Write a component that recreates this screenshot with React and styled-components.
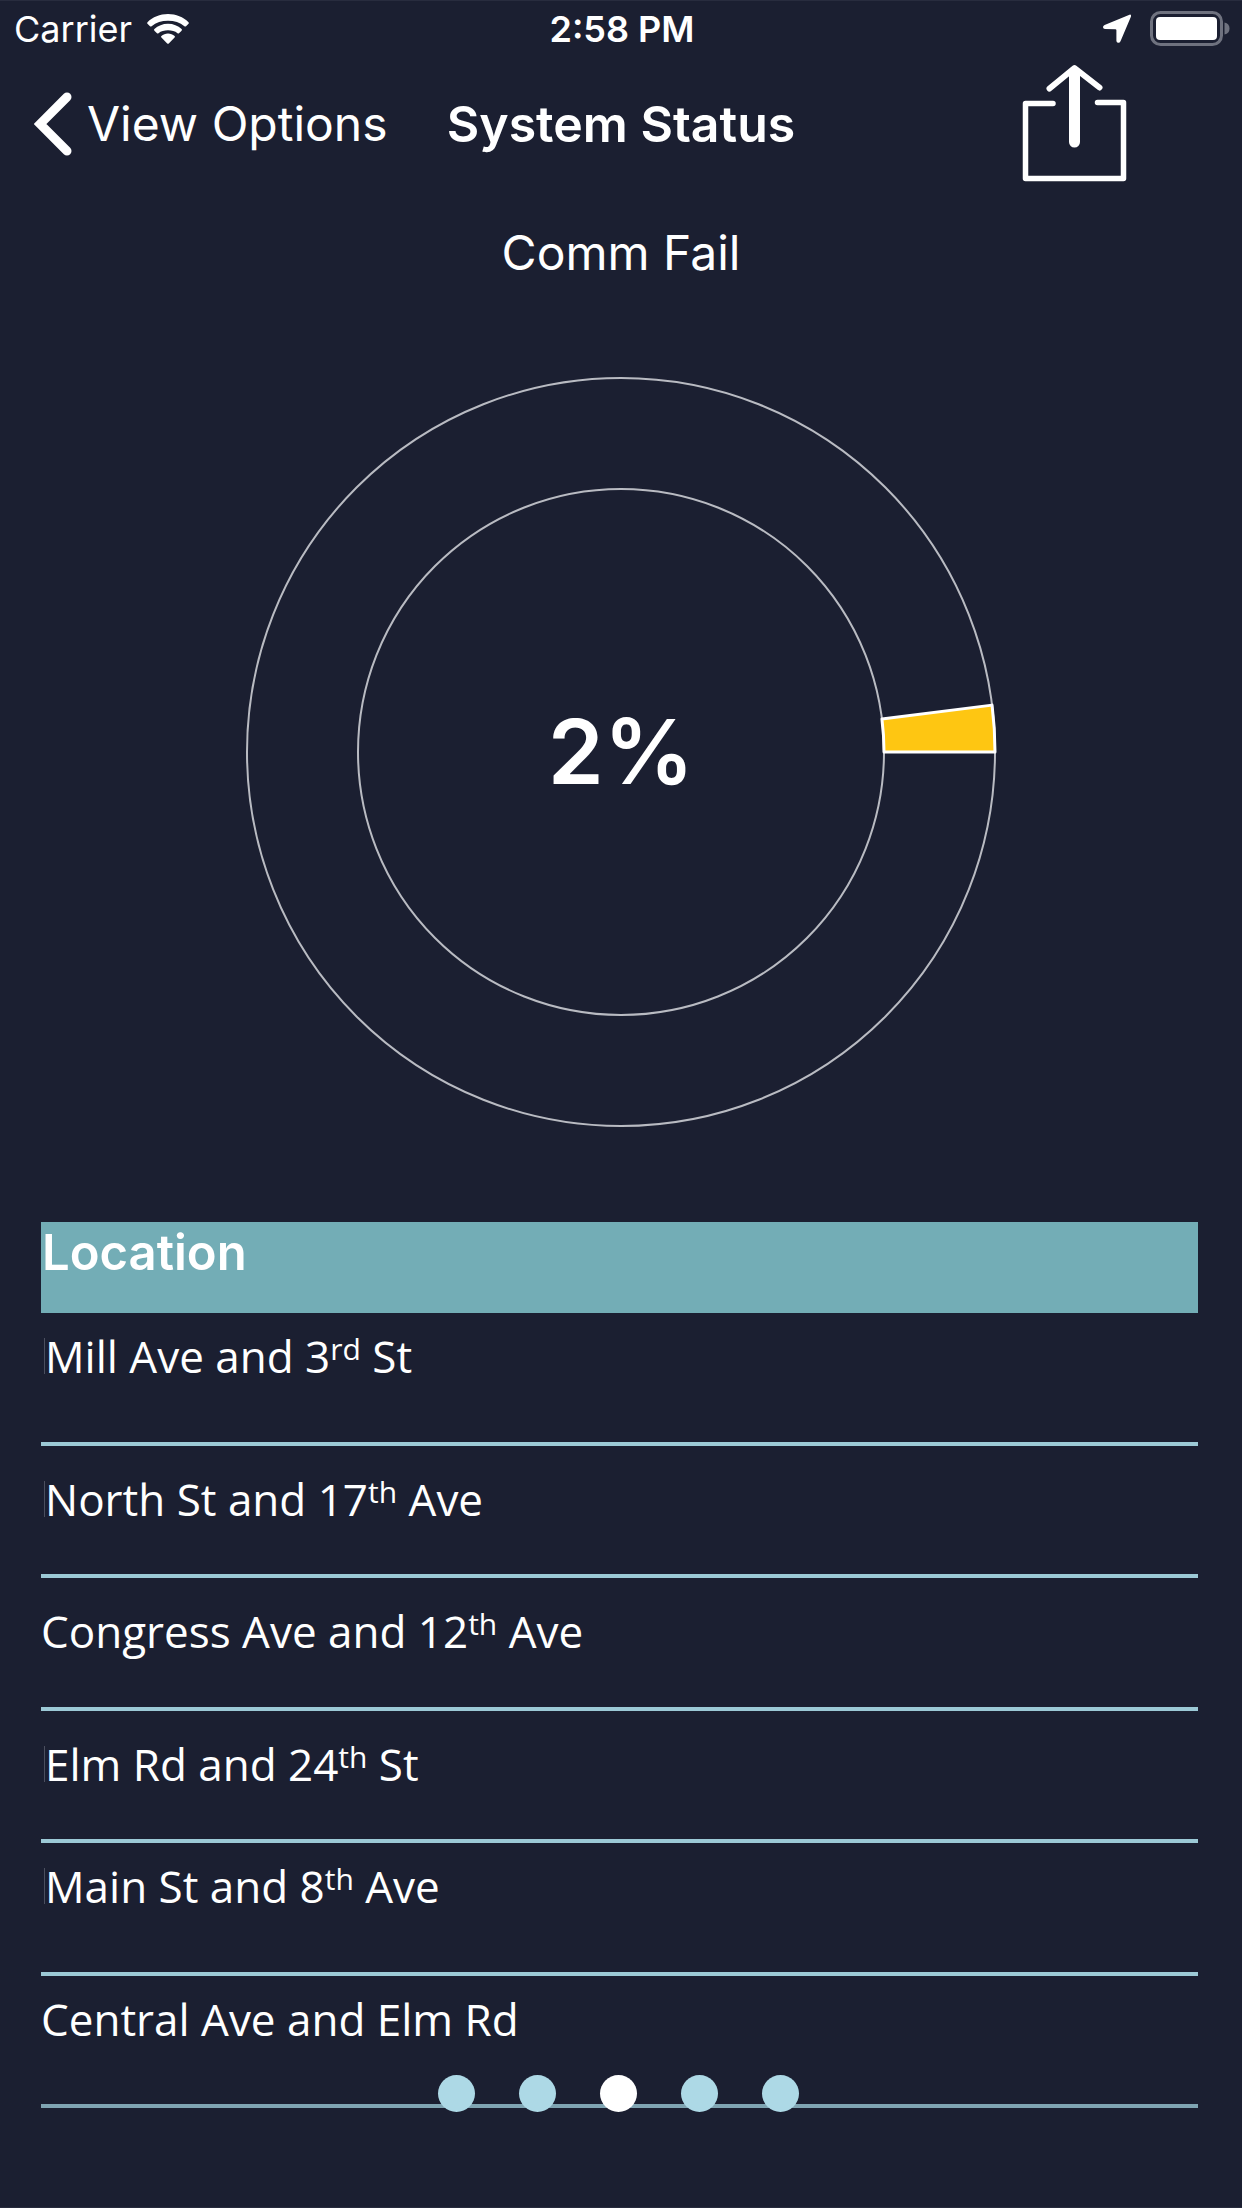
import styled, { createGlobalStyle } from 'styled-components';

const colors = {
  page: '#1b1f31',
  edge: '#282c3e',
  white: '#ffffff',
  teal: '#73adb6',
  line: '#9cc9d6',
  lineDim: '#7fa4b2',
  dot: '#add9e6',
  ring: '#b9bbc2',
  slice: '#fec612',
  muted: '#6f727f',
  tick: '#4b4f5f',
};

const GlobalStyle = createGlobalStyle`
  * {
    box-sizing: border-box;
  }

  body {
    margin: 0;
    background: ${colors.page};
    color: ${colors.white};
    font-family: Inter, 'Liberation Sans', sans-serif;
  }
`;

const Screen = styled.div`
  display: flex;
  flex-direction: column;
  min-height: 100vh;
  border-top: 1px solid ${colors.edge};
  border-bottom: 1px solid ${colors.edge};
`;

const StatusBar = styled.div`
  display: grid;
  grid-template-columns: 1fr auto 1fr;
  align-items: center;
  height: 56px;
  padding: 0 12px 0 14px;
  font-size: 36px;
  line-height: 44px;
`;

const StatusGroup = styled.div`
  display: flex;
  align-items: center;
  justify-content: ${(props) => (props.$end ? 'flex-end' : 'flex-start')};
  gap: ${(props) => (props.$end ? '18px' : '15px')};
`;

const Clock = styled.time`
  font-weight: 600;
`;

const Icon = styled.svg`
  display: block;
  flex: none;
`;

const NavBar = styled.header`
  display: grid;
  grid-template-columns: 1fr auto 1fr;
  align-items: center;
  height: 134px;
  line-height: 60px;
`;

const BackLink = styled.a`
  display: flex;
  align-items: center;
  gap: 15px;
  padding-left: 34px;
  color: inherit;
  font-size: 48px;
  text-decoration: none;
  white-space: nowrap;
`;

const Title = styled.h1`
  margin: 0;
  font-size: 50px;
  font-weight: 600;
`;

const ShareButton = styled.button`
  justify-self: end;
  margin: 0 114px 0 0;
  padding: 0;
  border: 0;
  background: none;
  color: inherit;
  cursor: pointer;
`;

const Main = styled.main`
  display: flex;
  flex-direction: column;
`;

const ChartTitle = styled.h2`
  margin: 0;
  padding: 32px 0;
  font-size: 48px;
  font-weight: 400;
  line-height: 60px;
  text-align: center;
`;

const Chart = styled.figure`
  display: grid;
  place-items: center;
  margin: 61px 0 94px;

  > * {
    grid-area: 1 / 1;
  }
`;

const Ring = styled.svg`
  display: block;
  width: 752px;
  max-width: 100%;
`;

const Percent = styled.figcaption`
  font-size: 90px;
  font-weight: 600;
  line-height: 112px;
`;

const LocationTable = styled.table`
  width: auto;
  margin: 0 44px 0 41px;
  border-collapse: separate;
  border-spacing: 0;
`;

const HeadCell = styled.th`
  height: 91px;
  padding: 0 1px;
  background: ${colors.teal};
  font-size: 49px;
  font-weight: 600;
  line-height: 62px;
  text-align: left;
  vertical-align: top;
`;

const Row = styled.tr`
  height: 133px;

  &:nth-child(even) {
    height: 132px;
  }
`;

const Cell = styled.td`
  padding: ${(props) => (props.$low ? '23px' : '13px')} 0 0;
  border-bottom: 4px solid ${colors.line};
  font-family: 'Open Sans', 'Noto Sans', sans-serif;
  font-size: 44px;
  line-height: 60px;
  vertical-align: top;

  ${Row}:last-child & {
    border-bottom-color: ${colors.lineDim};
  }
`;

const Place = styled.span`
  padding-left: ${(props) => (props.$ticked ? '4px' : '0')};
  background: linear-gradient(${colors.tick}, ${colors.tick}) 3px 50% / 1px 36px no-repeat;
  background-size: ${(props) => (props.$ticked ? '1px 36px' : '0 0')};
`;

const Ordinal = styled.sup`
  font-size: 30px;
  line-height: 0;
  vertical-align: 13px;
`;

// The pager rides over the last rule of the table.
const Pager = styled.nav`
  display: flex;
  justify-content: center;
  gap: 44px;
  margin-top: -33px;
  padding-right: 6px;
`;

const Dot = styled.button`
  width: 37px;
  height: 37px;
  padding: 0;
  border: 0;
  border-radius: 50%;
  background: ${(props) => (props.$active ? colors.white : colors.dot)};
  cursor: pointer;
`;

const locations = [
  { before: 'Mill Ave and 3', ordinal: 'rd', after: ' St', ticked: true },
  { before: 'North St and 17', ordinal: 'th', after: ' Ave', ticked: true, low: true },
  { before: 'Congress Ave and 12', ordinal: 'th', after: ' Ave', low: true },
  { before: 'Elm Rd and 24', ordinal: 'th', after: ' St', ticked: true, low: true },
  { before: 'Main St and 8', ordinal: 'th', after: ' Ave', ticked: true },
  { before: 'Central Ave and Elm Rd' },
];

const pages = ['Page 1', 'Page 2', 'Page 3', 'Page 4', 'Page 5'];

function WifiIcon() {
  return (
    <Icon width="42" height="32" viewBox="0 0 42 32" fill="#fff" aria-hidden="true">
      <path d="M21 1C13 1 5.700 4 .5 9.200Q-.2 10 .5 10.800L3 13.200Q3.800 13.900 4.600 13.200C9 9.500 14.700 7.700 21 7.700S33 9.500 37.400 13.200Q38.200 13.900 39 13.200L41.500 10.800Q42.200 10 41.500 9.200C36.300 4 29 1 21 1Z" />
      <path d="M21 10.800C15.700 10.800 11 12.800 7.400 16.100Q6.600 16.900 7.400 17.700L10 20.200Q10.700 20.900 11.500 20.200C14 18.200 17.300 17.300 21 17.300S28 18.200 30.500 20.200Q31.300 20.900 32 20.200L34.600 17.700Q35.400 16.900 34.600 16.100C31 12.800 26.300 10.800 21 10.800Z" />
      <path d="M21 20.600C18.500 20.600 16.200 21.500 14.400 23Q13.600 23.800 14.400 24.600L20.200 30.400Q21 31.200 21.800 30.400L27.600 24.600Q28.400 23.800 27.600 23C25.800 21.500 23.500 20.600 21 20.600Z" />
    </Icon>
  );
}

function ArrowIcon() {
  return (
    <Icon width="30" height="30" viewBox="0 0 30 30" fill="#fff" aria-hidden="true">
      <path d="M27.500 .7Q29.500 .2 29 2.500L18.500 27.300Q17.700 29.200 15.800 28.800Q14.400 28.400 14.400 26.800V16.300Q14.400 15.300 13.400 15.300L3 15Q1.200 14.800 1 13.300Q.9 11.800 2.600 11Z" />
    </Icon>
  );
}

function BatteryIcon() {
  return (
    <Icon width="80" height="36" viewBox="0 0 80 36" aria-hidden="true">
      <rect x="1.500" y="1.500" width="70" height="32" rx="9" fill="none" stroke={colors.muted} strokeWidth="3" />
      <rect x="6" y="6" width="61" height="23" rx="4" fill="#fff" />
      <path d="M74.500 11.500Q79.500 12.500 79.500 17.500T74.500 23.500Z" fill={colors.muted} />
    </Icon>
  );
}

function BackIcon() {
  return (
    <Icon width="38" height="64" viewBox="0 0 38 64" fill="none" aria-hidden="true">
      <path d="M33 5L6 32L33 59" stroke="#fff" strokeWidth="9" strokeLinecap="round" />
    </Icon>
  );
}

function ShareIcon() {
  return (
    <Icon width="106" height="120" viewBox="0 0 106 120" fill="none" stroke="#fff" strokeLinecap="round" strokeLinejoin="round" aria-hidden="true">
      <path d="M31 39.500H3.500V114.500H101.500V38.500H75.500" strokeWidth="5.500" />
      <path d="M27.500 24.500L52.500 4L77.500 23.500" strokeWidth="6" />
      <path d="M52.500 8V78" strokeWidth="11" />
    </Icon>
  );
}

function StatusRing({ value }) {
  const angle = (value / 100) * 2 * Math.PI;
  const point = (radius) => `${376 + radius * Math.cos(angle)} ${376 - radius * Math.sin(angle)}`;
  const slice = `M639 376H750A374 374 0 0 0 ${point(374)}L${point(263)}A263 263 0 0 1 639 376Z`;

  return (
    <Ring viewBox="0 0 752 752" role="img" aria-label={`Comm Fail ${value} percent`}>
      <circle cx="376" cy="376" r="374" fill="none" stroke={colors.ring} strokeWidth="2" />
      <circle cx="376" cy="376" r="263" fill="none" stroke={colors.ring} strokeWidth="2" />
      <path d={slice} fill={colors.slice} stroke="#fff" strokeWidth="3" strokeLinejoin="round" />
    </Ring>
  );
}

function App() {
  return (
    <Screen>
      <GlobalStyle />
      <StatusBar>
        <StatusGroup>
          <span>Carrier</span>
          <WifiIcon />
        </StatusGroup>
        <Clock>2:58 PM</Clock>
        <StatusGroup $end>
          <ArrowIcon />
          <BatteryIcon />
        </StatusGroup>
      </StatusBar>
      <NavBar>
        <BackLink href="#options">
          <BackIcon />
          View Options
        </BackLink>
        <Title>System Status</Title>
        <ShareButton type="button" aria-label="Share">
          <ShareIcon />
        </ShareButton>
      </NavBar>
      <Main>
        <ChartTitle>Comm Fail</ChartTitle>
        <Chart>
          <StatusRing value={2} />
          <Percent>2%</Percent>
        </Chart>
        <LocationTable>
          <thead>
            <tr>
              <HeadCell scope="col">Location</HeadCell>
            </tr>
          </thead>
          <tbody>
            {locations.map(({ before, ordinal, after, ticked, low }) => (
              <Row key={before}>
                <Cell $low={low}>
                  <Place $ticked={ticked}>
                    {before}
                    {ordinal && <Ordinal>{ordinal}</Ordinal>}
                    {after}
                  </Place>
                </Cell>
              </Row>
            ))}
          </tbody>
        </LocationTable>
        <Pager aria-label="Status pages">
          {pages.map((page, index) => (
            <Dot key={page} type="button" aria-label={page} $active={index === 2} />
          ))}
        </Pager>
      </Main>
    </Screen>
  );
}

export default App;
